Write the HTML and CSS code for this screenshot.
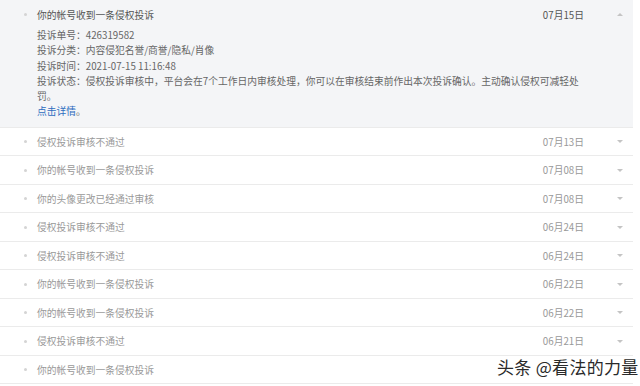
FILE: index.html
```html
<!DOCTYPE html>
<html lang="zh-CN">
<head>
    <meta charset="UTF-8">
    <meta name="viewport" content="width=device-width, initial-scale=1.0">
    <title>消息通知</title>
    <link rel="stylesheet" href="styles.css">
</head>
<body>
    <div class="list">
        <div class="item open">
            <div class="head">
                <span class="dot"></span>
                <span class="title">你的帐号收到一条侵权投诉</span>
                <span class="date">07月15日</span>
                <span class="arrow up"></span>
            </div>
            <div class="detail">
                <p>投诉单号：426319582</p>
                <p>投诉分类：内容侵犯名誉/商誉/隐私/肖像</p>
                <p>投诉时间：2021-07-15 11:16:48</p>
                <p>投诉状态：侵权投诉审核中，平台会在7个工作日内审核处理，你可以在审核结束前作出本次投诉确认。主动确认侵权可减轻处罚。</p>
                <p><a href="#">点击详情</a>。</p>
            </div>
        </div>
        <div class="item">
            <div class="head"><span class="dot"></span><span class="title">侵权投诉审核不通过</span><span class="date">07月13日</span><span class="arrow"></span></div>
        </div>
        <div class="item">
            <div class="head"><span class="dot"></span><span class="title">你的帐号收到一条侵权投诉</span><span class="date">07月08日</span><span class="arrow"></span></div>
        </div>
        <div class="item">
            <div class="head"><span class="dot"></span><span class="title">你的头像更改已经通过审核</span><span class="date">07月08日</span><span class="arrow"></span></div>
        </div>
        <div class="item">
            <div class="head"><span class="dot"></span><span class="title">侵权投诉审核不通过</span><span class="date">06月24日</span><span class="arrow"></span></div>
        </div>
        <div class="item">
            <div class="head"><span class="dot"></span><span class="title">侵权投诉审核不通过</span><span class="date">06月24日</span><span class="arrow"></span></div>
        </div>
        <div class="item">
            <div class="head"><span class="dot"></span><span class="title">你的帐号收到一条侵权投诉</span><span class="date">06月22日</span><span class="arrow"></span></div>
        </div>
        <div class="item">
            <div class="head"><span class="dot"></span><span class="title">你的帐号收到一条侵权投诉</span><span class="date">06月22日</span><span class="arrow"></span></div>
        </div>
        <div class="item">
            <div class="head"><span class="dot"></span><span class="title">侵权投诉审核不通过</span><span class="date">06月21日</span><span class="arrow"></span></div>
        </div>
        <div class="item">
            <div class="head"><span class="dot"></span><span class="title">你的帐号收到一条侵权投诉</span><span class="date"></span><span class="arrow hidden"></span></div>
        </div>
    </div>
    <div class="watermark">头条 @看法的力量</div>
</body>
</html>
```

FILE: styles.css
```css
body {
    margin: 0;
    background: #fff;
    font-family: "Noto Sans CJK SC", "Noto Sans", sans-serif;
    font-size: 9.75px;
    color: #999;
    overflow: hidden;
}
.list {
    width: 633px;
}
.item {
    border-bottom: 1px solid #ebebeb;
}
.item.open {
    background: #f4f5f7;
    padding-bottom: 7px;
}
.head {
    display: flex;
    align-items: center;
    height: 27.5px;
    padding: 0 10px 0 24px;
}
.open .head {
    height: 29px;
    color: #555;
}
.dot {
    width: 3px;
    height: 3px;
    border-radius: 50%;
    background: #d4d4d4;
    margin-right: 10px;
}
.title {
    flex: 1;
}
.date {
    margin-right: 33px;
}
.arrow {
    width: 0;
    height: 0;
    border-left: 3px solid transparent;
    border-right: 3px solid transparent;
    border-top: 3px solid #c4c4c4;
}
.arrow.up {
    border-top: none;
    border-bottom: 3px solid #c4c4c4;
}
.arrow.hidden {
    visibility: hidden;
}
.detail {
    padding-left: 37px;
    width: 548px;
    color: #666;
    line-height: 15.3px;
    margin-top: -1px;
}
.detail p {
    margin: 0;
}
.detail a {
    color: #2d6cbf;
    text-decoration: none;
}
.watermark {
    position: absolute;
    left: 497px;
    top: 354px;
    font-size: 17px;
    color: #2a2a2a;
    letter-spacing: 0.3px;
    text-shadow: 0 0 2px #fff, 0 0 2px #fff, 0 0 3px #fff;
}
```
